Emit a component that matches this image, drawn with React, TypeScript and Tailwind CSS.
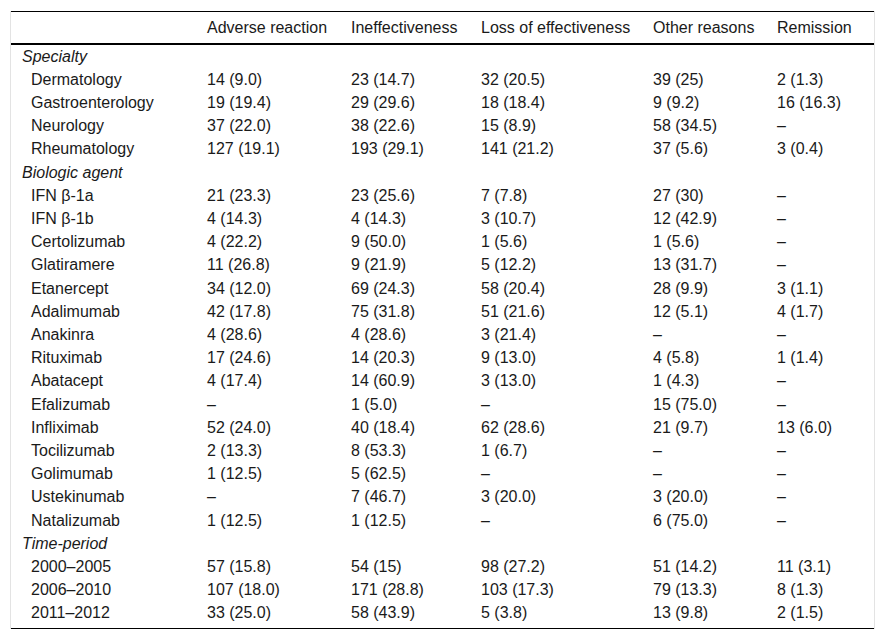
import React from "react";

type Row = { label: string; values: string[] };
type Group = { title: string; rows: Row[] };

const D = "–";

const groups: Group[] = [
  {
    title: "Specialty",
    rows: [
      { label: "Dermatology", values: ["14 (9.0)", "23 (14.7)", "32 (20.5)", "39 (25)", "2 (1.3)"] },
      { label: "Gastroenterology", values: ["19 (19.4)", "29 (29.6)", "18 (18.4)", "9 (9.2)", "16 (16.3)"] },
      { label: "Neurology", values: ["37 (22.0)", "38 (22.6)", "15 (8.9)", "58 (34.5)", D] },
      { label: "Rheumatology", values: ["127 (19.1)", "193 (29.1)", "141 (21.2)", "37 (5.6)", "3 (0.4)"] },
    ],
  },
  {
    title: "Biologic agent",
    rows: [
      { label: "IFN β-1a", values: ["21 (23.3)", "23 (25.6)", "7 (7.8)", "27 (30)", D] },
      { label: "IFN β-1b", values: ["4 (14.3)", "4 (14.3)", "3 (10.7)", "12 (42.9)", D] },
      { label: "Certolizumab", values: ["4 (22.2)", "9 (50.0)", "1 (5.6)", "1 (5.6)", D] },
      { label: "Glatiramere", values: ["11 (26.8)", "9 (21.9)", "5 (12.2)", "13 (31.7)", D] },
      { label: "Etanercept", values: ["34 (12.0)", "69 (24.3)", "58 (20.4)", "28 (9.9)", "3 (1.1)"] },
      { label: "Adalimumab", values: ["42 (17.8)", "75 (31.8)", "51 (21.6)", "12 (5.1)", "4 (1.7)"] },
      { label: "Anakinra", values: ["4 (28.6)", "4 (28.6)", "3 (21.4)", D, D] },
      { label: "Rituximab", values: ["17 (24.6)", "14 (20.3)", "9 (13.0)", "4 (5.8)", "1 (1.4)"] },
      { label: "Abatacept", values: ["4 (17.4)", "14 (60.9)", "3 (13.0)", "1 (4.3)", D] },
      { label: "Efalizumab", values: [D, "1 (5.0)", D, "15 (75.0)", D] },
      { label: "Infliximab", values: ["52 (24.0)", "40 (18.4)", "62 (28.6)", "21 (9.7)", "13 (6.0)"] },
      { label: "Tocilizumab", values: ["2 (13.3)", "8 (53.3)", "1 (6.7)", D, D] },
      { label: "Golimumab", values: ["1 (12.5)", "5 (62.5)", D, D, D] },
      { label: "Ustekinumab", values: [D, "7 (46.7)", "3 (20.0)", "3 (20.0)", D] },
      { label: "Natalizumab", values: ["1 (12.5)", "1 (12.5)", D, "6 (75.0)", D] },
    ],
  },
  {
    title: "Time-period",
    rows: [
      { label: "2000–2005", values: ["57 (15.8)", "54 (15)", "98 (27.2)", "51 (14.2)", "11 (3.1)"] },
      { label: "2006–2010", values: ["107 (18.0)", "171 (28.8)", "103 (17.3)", "79 (13.3)", "8 (1.3)"] },
      { label: "2011–2012", values: ["33 (25.0)", "58 (43.9)", "5 (3.8)", "13 (9.8)", "2 (1.5)"] },
    ],
  },
];

const headers = ["Adverse reaction", "Ineffectiveness", "Loss of effectiveness", "Other reasons", "Remission"];

export default function App() {
  return (
    <div
      className="bg-white w-[885px] h-[641px] pt-[11px] pl-[10px] text-[#1a1a1a]"
      style={{ fontFamily: '"Liberation Sans", Arial, sans-serif' }}
    >
      <div className="w-[865px] border-x border-[#e3e3e3]">
        <table className="w-full border-collapse table-fixed text-[16px] leading-[23.2px]">
          <colgroup>
            <col className="w-[188px]" />
            <col className="w-[144px]" />
            <col className="w-[130px]" />
            <col className="w-[172px]" />
            <col className="w-[124px]" />
            <col />
          </colgroup>
          <thead>
            <tr className="h-[32px] border-t border-black border-b-2">
              <th />
              {headers.map((h) => (
                <th key={h} className="pl-2 text-left font-normal whitespace-nowrap">
                  {h}
                </th>
              ))}
            </tr>
          </thead>
          <tbody className="border-b border-black">
            {groups.map((g) => (
              <React.Fragment key={g.title}>
                <tr className="h-[23.2px]">
                  <td colSpan={6} className="pl-[11px] italic">
                    {g.title}
                  </td>
                </tr>
                {g.rows.map((r) => (
                  <tr key={r.label} className="h-[23.2px]">
                    <td className="pl-[20px] whitespace-nowrap">{r.label}</td>
                    {r.values.map((v, i) => (
                      <td key={i} className="pl-2 whitespace-nowrap">
                        {v}
                      </td>
                    ))}
                  </tr>
                ))}
              </React.Fragment>
            ))}
            <tr className="h-[4px]">
              <td colSpan={6} />
            </tr>
          </tbody>
        </table>
      </div>
    </div>
  );
}
